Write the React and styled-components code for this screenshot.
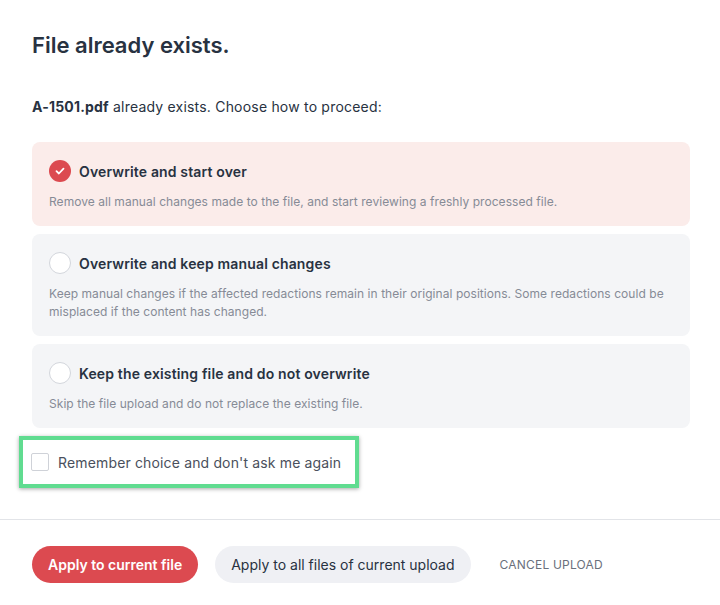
import React, { useState } from "react";
import styled, { createGlobalStyle } from "styled-components";

const Global = createGlobalStyle`
  body {
    margin: 0;
    background: #ffffff;
    font-family: Inter, "Noto Sans", sans-serif;
    color: #283241;
  }
`;

const Dialog = styled.div`
  width: 720px;
  height: 605px;
  display: flex;
  flex-direction: column;
  background: #fff;
`;

const Body = styled.div`
  padding: 32px 30px 0 32px;
  display: flex;
  flex-direction: column;
`;

const Title = styled.h1`
  margin: 0;
  font-size: 22px;
  line-height: 26px;
  font-weight: 600;
  color: #283241;
`;

const Intro = styled.p`
  margin: 40px 0 0;
  font-size: 14px;
  line-height: 18px;
  letter-spacing: 0.2px;
  color: #283241;

  b {
    font-weight: 700;
  }
`;

const Options = styled.div`
  margin-top: 26px;
  display: flex;
  flex-direction: column;
  gap: 8px;
`;

const Card = styled.div`
  border-radius: 8px;
  padding: 17px 17px 15px 17px;
  background: ${(p) => (p.$active ? "#fbecea" : "#f4f5f7")};
  cursor: pointer;
`;

const CardHead = styled.div`
  display: flex;
  align-items: center;
  gap: 8px;
  height: 24px;
`;

const Radio = styled.span`
  width: 22px;
  height: 22px;
  border-radius: 50%;
  box-sizing: border-box;
  flex: none;
  display: flex;
  align-items: center;
  justify-content: center;
  background: ${(p) => (p.$on ? "#dc4a50" : "#fff")};
  border: ${(p) => (p.$on ? "none" : "1px solid #d3d6dc")};
`;

const CardTitle = styled.span`
  font-size: 14px;
  font-weight: 600;
  letter-spacing: 0.15px;
  color: #283241;
`;

const CardText = styled.div`
  margin-top: 10px;
  font-size: 12px;
  line-height: 18px;
  letter-spacing: 0.05px;
  color: #868b96;
`;

const Highlight = styled.div`
  margin: 8px 0 0 -13px;
  width: 340px;
  height: 52px;
  box-sizing: border-box;
  border: 4px solid #60dc90;
  box-shadow: 0 1px 4px rgba(0, 0, 0, 0.35);
  display: flex;
  align-items: center;
  padding-left: 8px;
`;

const CheckRow = styled.label`
  display: flex;
  align-items: center;
  gap: 9px;
  font-size: 14px;
  letter-spacing: 0.15px;
  color: #4a505c;
  cursor: pointer;
`;

const Box = styled.span`
  width: 18px;
  height: 18px;
  box-sizing: border-box;
  border: 1px solid #cfd2d8;
  border-radius: 2px;
  background: #fff;
`;

const Footer = styled.div`
  margin-top: 31px;
  border-top: 1px solid #e2e4e8;
  padding: 26px 32px 0;
  display: flex;
  align-items: center;
  gap: 17px;
`;

const Button = styled.button`
  height: 37px;
  border: none;
  border-radius: 19px;
  padding: 0 16px;
  font-family: inherit;
  font-size: 14px;
  cursor: pointer;
  font-weight: ${(p) => (p.$primary ? 600 : 400)};
  background: ${(p) => (p.$primary ? "#dc4a50" : "#eff0f4")};
  color: ${(p) => (p.$primary ? "#fff" : "#283241")};
`;

const TextButton = styled.button`
  border: none;
  background: none;
  font-family: inherit;
  font-size: 12px;
  letter-spacing: 0.2px;
  text-transform: uppercase;
  color: #6a707c;
  margin-left: 6px;
  cursor: pointer;
`;

const options = [
  {
    title: "Overwrite and start over",
    text: "Remove all manual changes made to the file, and start reviewing a freshly processed file.",
  },
  {
    title: "Overwrite and keep manual changes",
    text: "Keep manual changes if the affected redactions remain in their original positions. Some redactions could be misplaced if the content has changed.",
  },
  {
    title: "Keep the existing file and do not overwrite",
    text: "Skip the file upload and do not replace the existing file.",
  },
];

const Check = () => (
  <svg width="12" height="12" viewBox="0 0 12 12" fill="none">
    <path d="M2.5 6.2l2.4 2.3 4.6-4.8" stroke="#fff" strokeWidth="1.8" strokeLinecap="round" strokeLinejoin="round" />
  </svg>
);

export default function App() {
  const [selected, setSelected] = useState(0);

  return (
    <>
      <Global />
      <Dialog>
        <Body>
          <Title>File already exists.</Title>
          <Intro>
            <b>A-1501.pdf</b> already exists. Choose how to proceed:
          </Intro>
          <Options>
            {options.map((o, i) => (
              <Card key={o.title} $active={selected === i} onClick={() => setSelected(i)}>
                <CardHead>
                  <Radio $on={selected === i}>{selected === i && <Check />}</Radio>
                  <CardTitle>{o.title}</CardTitle>
                </CardHead>
                <CardText>{o.text}</CardText>
              </Card>
            ))}
          </Options>
          <Highlight>
            <CheckRow>
              <Box />
              Remember choice and don't ask me again
            </CheckRow>
          </Highlight>
        </Body>
        <Footer>
          <Button $primary>Apply to current file</Button>
          <Button>Apply to all files of current upload</Button>
          <TextButton>Cancel upload</TextButton>
        </Footer>
      </Dialog>
    </>
  );
}
